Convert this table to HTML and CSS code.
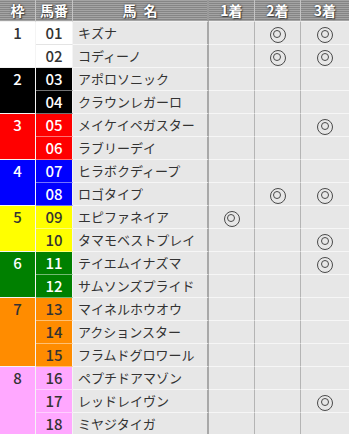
FILE: index.html
```html
<!DOCTYPE html>
<html lang="ja">
<head>
<meta charset="utf-8">
<link rel="stylesheet" href="styles.css">
</head>
<body>
<table class="tbl">
  <colgroup>
    <col class="c-waku"><col class="c-num"><col class="c-name"><col class="c-r1"><col class="c-r2"><col class="c-r3">
  </colgroup>
  <thead>
    <tr>
      <th class="waku">枠</th><th class="num">馬番</th><th class="name">馬 名</th><th class="r r1">1着</th><th class="r r2">2着</th><th class="r r3">3着</th>
    </tr>
  </thead>
  <tbody>
    <tr><td class="w w1" rowspan="2">1</td><td class="n w1">01</td><td class="name">キズナ</td><td class="r r1"></td><td class="r r2"><span class="mk"></span></td><td class="r r3"><span class="mk"></span></td></tr>
    <tr><td class="n w1">02</td><td class="name">コディーノ</td><td class="r r1"></td><td class="r r2"><span class="mk"></span></td><td class="r r3"><span class="mk"></span></td></tr>
    <tr><td class="w w2" rowspan="2">2</td><td class="n w2">03</td><td class="name">アポロソニック</td><td class="r r1"></td><td class="r r2"></td><td class="r r3"></td></tr>
    <tr><td class="n w2">04</td><td class="name">クラウンレガーロ</td><td class="r r1"></td><td class="r r2"></td><td class="r r3"></td></tr>
    <tr><td class="w w3" rowspan="2">3</td><td class="n w3">05</td><td class="name">メイケイペガスター</td><td class="r r1"></td><td class="r r2"></td><td class="r r3"><span class="mk"></span></td></tr>
    <tr><td class="n w3">06</td><td class="name">ラブリーデイ</td><td class="r r1"></td><td class="r r2"></td><td class="r r3"></td></tr>
    <tr><td class="w w4" rowspan="2">4</td><td class="n w4">07</td><td class="name">ヒラボクディープ</td><td class="r r1"></td><td class="r r2"></td><td class="r r3"></td></tr>
    <tr><td class="n w4">08</td><td class="name">ロゴタイプ</td><td class="r r1"></td><td class="r r2"><span class="mk"></span></td><td class="r r3"><span class="mk"></span></td></tr>
    <tr><td class="w w5" rowspan="2">5</td><td class="n w5">09</td><td class="name">エピファネイア</td><td class="r r1"><span class="mk"></span></td><td class="r r2"></td><td class="r r3"></td></tr>
    <tr><td class="n w5">10</td><td class="name">タマモベストプレイ</td><td class="r r1"></td><td class="r r2"></td><td class="r r3"><span class="mk"></span></td></tr>
    <tr><td class="w w6" rowspan="2">6</td><td class="n w6">11</td><td class="name">テイエムイナズマ</td><td class="r r1"></td><td class="r r2"></td><td class="r r3"><span class="mk"></span></td></tr>
    <tr><td class="n w6">12</td><td class="name">サムソンズプライド</td><td class="r r1"></td><td class="r r2"></td><td class="r r3"></td></tr>
    <tr><td class="w w7" rowspan="3">7</td><td class="n w7">13</td><td class="name">マイネルホウオウ</td><td class="r r1"></td><td class="r r2"></td><td class="r r3"></td></tr>
    <tr><td class="n w7">14</td><td class="name">アクションスター</td><td class="r r1"></td><td class="r r2"></td><td class="r r3"></td></tr>
    <tr><td class="n w7">15</td><td class="name">フラムドグロワール</td><td class="r r1"></td><td class="r r2"></td><td class="r r3"></td></tr>
    <tr><td class="w w8" rowspan="3">8</td><td class="n w8">16</td><td class="name">ペプチドアマゾン</td><td class="r r1"></td><td class="r r2"></td><td class="r r3"></td></tr>
    <tr><td class="n w8">17</td><td class="name">レッドレイヴン</td><td class="r r1"></td><td class="r r2"></td><td class="r r3"><span class="mk"></span></td></tr>
    <tr><td class="n w8">18</td><td class="name">ミヤジタイガ</td><td class="r r1"></td><td class="r r2"></td><td class="r r3"></td></tr>
  </tbody>
</table>
</body>
</html>
```

FILE: styles.css
```css
html, body {
  margin: 0;
  padding: 0;
  background: #ffffff;
}
body {
  font-family: "Noto Sans CJK JP", "Noto Sans", sans-serif;
  color: #333333;
}
.tbl {
  border-collapse: separate;
  border-spacing: 0;
  table-layout: fixed;
  width: 349px;
}
.c-waku { width: 36px; }
.c-num { width: 37px; }
.c-name { width: 136px; }
.c-r1 { width: 46px; }
.c-r2 { width: 46px; }
.c-r3 { width: 48px; }

th, td {
  box-sizing: border-box;
  padding: 0;
  border-right: 1px solid #f4f4f4;
  border-bottom: 1px solid #f4f4f4;
}
th {
  height: 22px;
  line-height: 21px;
  font-size: 14px;
  font-weight: bold;
  color: #ffffff;
  text-align: center;
  text-shadow: 0 0 2px #333333, 1px 1px 1px #444444;
  background: repeating-linear-gradient(to bottom, #a4a4a4 0, #a4a4a4 1px, #858585 1px, #858585 2px);
  border-right: 1px solid #c4c4c4;
  border-bottom: 1px solid #f0f0f0;
}
th.name {
  border-right: 2px solid #9a9a9a;
  word-spacing: 4px;
}
th.r3, td.r3 { border-right: none; }

td {
  height: 23px;
  line-height: 22px;
  vertical-align: middle;
}
td.w {
  vertical-align: top;
  text-align: center;
  font-size: 15px;
  font-weight: 500;
  border-bottom: 1px solid #f4f4f4;
}
td.n {
  text-align: center;
  font-size: 15px;
  font-weight: 500;
  border-bottom: 1px solid rgba(255, 255, 255, 0.45);
  border-right: 1px solid #f4f4f4;
}
td.name {
  background: #e7e7e7;
  font-size: 13px;
  padding-left: 5px;
  white-space: nowrap;
  color: #333333;
  border-right: 2px solid #a8a8a8;
  border-bottom: 1px solid #f6f6f6;
}
td.r {
  background: #e7e7e7;
  text-align: center;
  border-right: 1px solid #b4b4b4;
  border-bottom: 1px solid #f6f6f6;
}
td.r3 { border-right: none; }

.w1 { background: #ffffff; color: #333333; }
.w2 { background: #000000; color: #ffffff; }
.w3 { background: #ff0000; color: #ffffff; }
.w4 { background: #0000ff; color: #ffffff; }
.w5 { background: #ffff00; color: #333333; }
.w6 { background: #008000; color: #ffffff; }
.w7 { background: #ff8c00; color: #333333; }
.w8 { background: #ffa8ff; color: #333333; }
td.n.w1 { border-bottom-color: #e4e4e4; }

.mk {
  display: inline-block;
  vertical-align: middle;
  width: 16px;
  height: 16px;
  box-sizing: border-box;
  border: 1.3px solid #4a4a4a;
  border-radius: 50%;
  position: relative;
  top: -1px;
}
.mk::after {
  content: "";
  position: absolute;
  left: 2.7px;
  top: 2.7px;
  width: 8px;
  height: 8px;
  box-sizing: border-box;
  border: 1.3px solid #4a4a4a;
  border-radius: 50%;
}
```
